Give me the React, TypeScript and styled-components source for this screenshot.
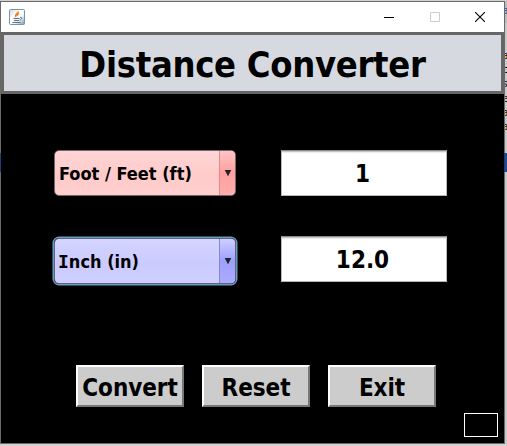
import React from "react";
import styled, { createGlobalStyle } from "styled-components";

const GlobalStyle = createGlobalStyle`
  * { box-sizing: border-box; }
  html, body { margin: 0; padding: 0; overflow: hidden; }
  button { font: inherit; color: inherit; margin: 0; }
`;

const Desktop = styled.div`
  width: 507px;
  height: 446px;
  display: flex;
  padding-top: 1px;
  background: #d2d2d2;
  font-family: "DejaVu Sans Condensed", "DejaVu Sans", sans-serif;
  font-stretch: condensed;
  font-weight: bold;
  color: #000;
`;

const Window = styled.main`
  width: 505px;
  height: 443px;
  flex: none;
  display: flex;
  flex-direction: column;
  border: 1px solid #696969;
  border-image: linear-gradient(#696969 0 152px, #1c3f78 152px 171px, #696969 171px) 1;
  background: #000;
`;

const Behind = styled.aside`
  width: 2px;
  height: 443px;
  overflow: hidden;
  background: linear-gradient(#bdbdbd 0 22px, #c9c9c9 22px 152px, #204b8d 152px 171px, #c9c9c9 171px);
  padding-top: 3px;
  font: 11px/14.4px "DejaVu Sans", sans-serif;
`;

const Fragment = styled.div<{ $link?: boolean }>`
  height: ${(p) => (p.$link ? 45 : 14.2)}px;
  color: ${(p) => (p.$link ? "#2451a0" : "#111")};
  text-indent: -3px;
`;

const TitleBar = styled.header`
  height: 30px;
  flex: none;
  display: flex;
  align-items: center;
  justify-content: space-between;
  padding-left: 8px;
  background: #fff;
`;

const WindowControls = styled.div`
  display: flex;
  padding-right: 1px;
`;

const ControlButton = styled.button<{ $muted?: boolean }>`
  width: ${(p) => (p.$muted ? 45 : 46)}px;
  height: 30px;
  padding: 0;
  border: 0;
  background: none;
  display: flex;
  align-items: center;
  justify-content: center;
  color: ${(p) => (p.$muted ? "#ccc" : "#000")};
`;

const Banner = styled.h1`
  height: 62px;
  flex: none;
  margin: 0;
  padding-top: 3px;
  border: 3px solid #666;
  background: #d6d9e0;
  display: flex;
  align-items: center;
  justify-content: center;
  font-size: 36px;
  line-height: 1;
  letter-spacing: -0.3px;
  white-space: nowrap;
`;

const Form = styled.section`
  display: grid;
  grid-template-columns: 182px 166px;
  grid-template-rows: 46px 46px;
  column-gap: 45px;
  row-gap: 40px;
  padding: 56px 0 0 53px;
`;

const Combo = styled.button<{ $tone: "pink" | "blue" }>`
  width: 182px;
  height: 46px;
  padding: 0;
  display: flex;
  overflow: hidden;
  border: 1px solid ${(p) => (p.$tone === "pink" ? "#74656c" : "#626278")};
  border-radius: 5px;
  text-align: left;
  font-size: 18px;
  letter-spacing: 0;
  background: ${(p) =>
    p.$tone === "pink"
      ? "linear-gradient(#ffd5d5, #ffcaca 55%, #ffcece)"
      : "linear-gradient(#d5d5ff, #cacaff 55%, #cfcfff)"};
  ${(p) => p.$tone === "blue" && "margin-top: 2px; box-shadow: 0 0 0 1.5px #659bc4;"}
`;

const ComboLabel = styled.span`
  flex: 1;
  align-self: center;
  padding: 2px 0 0 4px;
  line-height: 22px;
  white-space: nowrap;
`;

const SerifCapital = styled.span`
  font-family: "DejaVu Sans Mono", monospace;
  margin-left: -1px;
`;

const ComboArrow = styled.span<{ $tone: "pink" | "blue" }>`
  width: 16px;
  height: 44px;
  display: flex;
  align-items: center;
  justify-content: center;
  border-left: 1px solid ${(p) => (p.$tone === "pink" ? "#d98d91" : "#8888c5")};
  background: ${(p) =>
    p.$tone === "pink"
      ? "linear-gradient(#ffc4c4, #ff9f9f 50%, #ffacac)"
      : "linear-gradient(#cdcdff, #9f9fff 50%, #ababff)"};
`;

const Field = styled.output`
  width: 166px;
  height: 46px;
  display: flex;
  align-items: center;
  justify-content: center;
  padding-top: 1px;
  padding-right: 3px;
  border: 1px solid #b8b8b8;
  border-top-color: #8b8b8b;
  background: linear-gradient(#c5c5c5 0 1px, #ececec 1px 2px, #fff 2px);
  font-size: 24px;
  letter-spacing: 0;
  line-height: 28px;
`;

const Actions = styled.nav`
  display: flex;
  gap: 18px;
  padding: 83px 0 0 75px;
`;

const ActionButton = styled.button`
  width: 108px;
  height: 42px;
  padding: 3px 0 0;
  border: 2px solid;
  border-color: #fff #777 #777 #fff;
  background: #ccc;
  font-size: 24px;
  line-height: 28px;
  letter-spacing: -0.05px;
  white-space: nowrap;
`;

const StatusBox = styled.div`
  width: 34px;
  height: 24px;
  align-self: flex-end;
  margin: 6px 6px 0 0;
  border: 1px solid #fff;
`;

const JavaIcon = () => (
  <svg width="16" height="16" viewBox="0 0 16 16">
    <defs>
      <linearGradient id="tile" x1="0" y1="0" x2="1" y2="1">
        <stop offset="0" stopColor="#c5d3e0" />
        <stop offset="0.35" stopColor="#fff" />
        <stop offset="0.65" stopColor="#f3f5f7" />
        <stop offset="1" stopColor="#7793aa" />
      </linearGradient>
    </defs>
    <rect x="0.5" y="0.5" width="15" height="15" rx="1" fill="url(#tile)" stroke="#7893a9" />
    <path d="M9.2 2.3C10 4 5 5.2 6.8 8M10 4.5C8 5.4 7.7 6 8.5 7.2" fill="none" stroke="#f08022" strokeWidth="1.4" />
    <path d="M4.5 9.5H10.5M5 11.5H10M3.5 13.5H11.5M11 8.5C13.4 7.6 13.2 10.6 10.7 11" fill="none" stroke="#517591" />
  </svg>
);

const Arrow = () => (
  <svg width="8" height="8" viewBox="0 0 8 8">
    <path d="M0.7 1H7.3L4 7.3Z" fill="#202027" />
  </svg>
);

export default function App() {
  return (
    <>
      <GlobalStyle />
      <Desktop>
        <Window>
          <TitleBar>
            <JavaIcon />
            <WindowControls>
              <ControlButton aria-label="Minimize">
                <svg width="10" height="10" viewBox="0 0 10 10"><path d="M0 5.5H10" stroke="currentColor" /></svg>
              </ControlButton>
              <ControlButton aria-label="Maximize" $muted>
                <svg width="10" height="10" viewBox="0 0 10 10"><path d="M.5.5H9.5V9.5H.5Z" fill="none" stroke="currentColor" /></svg>
              </ControlButton>
              <ControlButton aria-label="Close">
                <svg width="10" height="10" viewBox="0 0 10 10"><path d="M0 0L10 10M10 0L0 10" stroke="currentColor" strokeWidth="1.1" /></svg>
              </ControlButton>
            </WindowControls>
          </TitleBar>
          <Banner>Distance Converter</Banner>
          <Form>
            <Combo $tone="pink">
              <ComboLabel>Foot / Feet (ft)</ComboLabel>
              <ComboArrow $tone="pink"><Arrow /></ComboArrow>
            </Combo>
            <Field>1</Field>
            <Combo $tone="blue">
              <ComboLabel><SerifCapital>I</SerifCapital>nch (in)</ComboLabel>
              <ComboArrow $tone="blue"><Arrow /></ComboArrow>
            </Combo>
            <Field>12.0</Field>
          </Form>
          <Actions>
            <ActionButton>Convert</ActionButton>
            <ActionButton>Reset</ActionButton>
            <ActionButton>Exit</ActionButton>
          </Actions>
          <StatusBox />
        </Window>
        <Behind aria-hidden="true">
          <Fragment $link>a</Fragment>
          <Fragment>a</Fragment>
          <Fragment>c</Fragment>
          <Fragment>s</Fragment>
          <Fragment>e</Fragment>
          <Fragment>a</Fragment>
          <Fragment>a</Fragment>
        </Behind>
      </Desktop>
    </>
  );
}
